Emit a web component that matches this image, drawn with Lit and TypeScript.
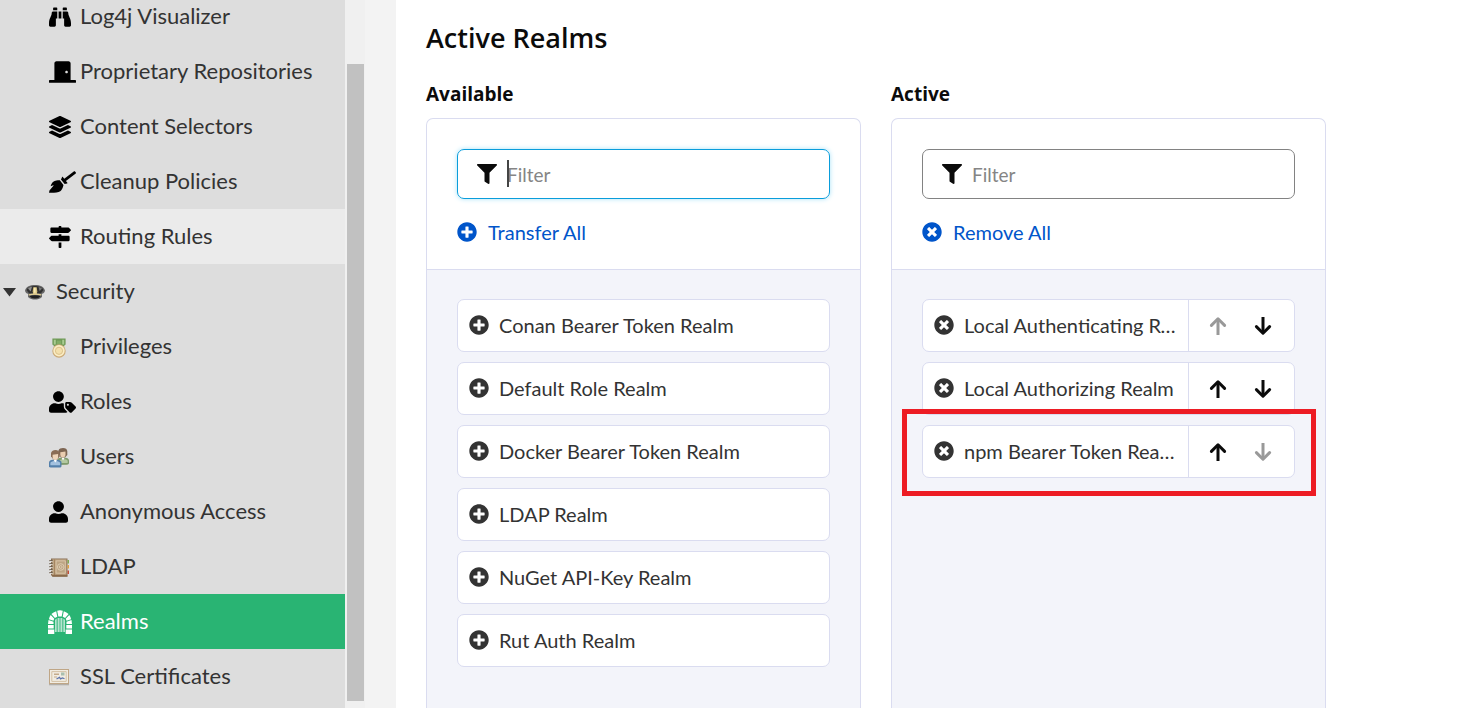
import { LitElement, html, css, svg, nothing } from "lit";
import { customElement, property, state } from "lit/decorators.js";
import { classMap } from "lit/directives/class-map.js";

const glyphs: Record<string, { w: number; d: string }> = {
  binoculars: { w: 512, d: "M416 48c0-8.84-7.16-16-16-16h-64c-8.84 0-16 7.16-16 16v48h96V48zM63.91 159.99C61.4 253.84 3.46 274.22 0 404v44c0 17.67 14.33 32 32 32h96c17.67 0 32-14.33 32-32V288h32V128H95.84c-17.63 0-31.45 14.37-31.93 31.99zm384.18 0c-.48-17.62-14.3-31.99-31.93-31.99H320v160h32v160c0 17.67 14.33 32 32 32h96c17.67 0 32-14.33 32-32v-44c-3.46-129.78-61.4-150.16-63.91-244.01zM176 32h-64c-8.84 0-16 7.16-16 16v48h96V48c0-8.84-7.16-16-16-16zm48 256h64V128h-64v160z" },
  door: { w: 640, d: "M624 448H512V50.8C512 22.78 490.47 0 464 0H175.99c-26.47 0-48 22.78-48 50.8V448H16c-8.84 0-16 7.16-16 16v32c0 8.84 7.16 16 16 16h608c8.84 0 16-7.16 16-16v-32c0-8.84-7.16-16-16-16zM415.99 288c-17.67 0-32-14.33-32-32s14.33-32 32-32 32 14.33 32 32c.01 17.67-14.32 32-32 32z" },
  layers: { w: 512, d: "M12.41 148.02l232.94 105.67c6.8 3.09 14.49 3.09 21.29 0l232.94-105.67c16.55-7.51 16.55-32.52 0-40.03L266.65 2.31a25.607 25.607 0 0 0-21.29 0L12.41 107.98c-16.55 7.51-16.55 32.53 0 40.04zm487.18 88.28l-58.09-26.33-161.64 73.27c-7.56 3.43-15.59 5.17-23.86 5.17s-16.29-1.74-23.86-5.17L70.51 209.97l-58.1 26.33c-16.55 7.5-16.55 32.5 0 40l232.94 105.59c6.8 3.08 14.49 3.08 21.29 0L499.59 276.3c16.55-7.5 16.55-32.5 0-40zm0 127.8l-57.87-26.23-161.86 73.37c-7.56 3.43-15.59 5.17-23.86 5.17s-16.29-1.74-23.86-5.17L70.29 337.87 12.41 364.1c-16.55 7.5-16.55 32.5 0 40l232.94 105.59c6.8 3.08 14.49 3.08 21.29 0L499.59 404.1c16.55-7.5 16.55-32.5 0-40z" },
  broom: { w: 640, d: "M256.47 216.77l86.73 109.18s-16.6 102.36-76.57 150.12C206.66 523.85 0 510.19 0 510.19s3.8-23.14 11-55.43l94.62-112.17c3.97-4.7-.87-11.62-6.65-9.5l-60.4 22.09c14.44-41.66 32.72-80.04 54.6-97.47 59.97-47.76 163.3-40.94 163.3-40.94zM636.53 31.03l-19.86-25c-5.49-6.9-15.52-8.05-22.41-2.56l-232.48 177.8-34.14-42.97c-5.09-6.41-15.14-5.21-18.59 2.21l-25.33 54.55 86.73 109.18 58.8-12.45c8-1.69 11.42-11.2 6.34-17.6l-34.09-42.92 232.48-177.8c6.89-5.48 8.04-15.53 2.55-22.44z" },
  signs: { w: 512, d: "M507.31 84.69L464 41.37c-6-6-14.14-9.37-22.63-9.37H288V16c0-8.84-7.16-16-16-16h-32c-8.84 0-16 7.16-16 16v16H56c-13.25 0-24 10.75-24 24v80c0 13.25 10.75 24 24 24h385.37c8.49 0 16.62-3.37 22.63-9.37l43.31-43.31c6.25-6.26 6.25-16.38 0-22.63zM224 496c0 8.84 7.16 16 16 16h32c8.84 0 16-7.16 16-16V384h-64v112zm232-272H288v-32h-64v32H70.63c-8.49 0-16.62 3.37-22.63 9.37L4.69 276.69c-6.25 6.25-6.25 16.38 0 22.63L48 342.63c6 6 14.14 9.37 22.63 9.37H456c13.25 0 24-10.75 24-24v-80c0-13.25-10.75-24-24-24z" },
  user: { w: 448, d: "M224 256c70.7 0 128-57.3 128-128S294.7 0 224 0 96 57.3 96 128s57.3 128 128 128zm89.6 32h-16.7c-22.2 10.2-46.9 16-72.9 16s-50.6-5.8-72.9-16h-16.7C60.2 288 0 348.2 0 422.4V464c0 26.5 21.5 48 48 48h352c26.5 0 48-21.5 48-48v-41.6c0-74.2-60.2-134.4-134.4-134.4z" },
  userTag: { w: 640, d: "M630.6 364.9l-90.3-90.2c-12-12-28.3-18.7-45.3-18.7h-79.3c-17.7 0-32 14.3-32 32v79.2c0 17 6.7 33.2 18.7 45.2l90.3 90.2c12.5 12.5 32.8 12.5 45.3 0l92.5-92.5c12.6-12.5 12.6-32.7.1-45.2zm-182.8-21c-13.3 0-24-10.7-24-24s10.7-24 24-24 24 10.7 24 24c0 13.2-10.7 24-24 24zm-223.8-88c70.7 0 128-57.3 128-128C352 57.3 294.7 0 224 0S96 57.3 96 128c0 70.6 57.3 127.9 128 127.9zm127.8 111.2V294c-12.2-3.6-24.9-6.2-38.2-6.2h-16.7c-22.2 10.2-46.9 16-72.9 16s-50.6-5.8-72.9-16h-16.7c-74.2 0-134.4 60.2-134.4 134.4V464c0 26.5 21.5 48 48 48h352c15.5 0 29.1-7.5 37.9-18.9l-58-58c-18.1-18.1-28.1-42.2-28.1-68z" },
  plus: { w: 512, d: "M256 8C119 8 8 119 8 256s111 248 248 248 248-111 248-248S393 8 256 8zm144 276c0 6.6-5.4 12-12 12h-92v92c0 6.6-5.4 12-12 12h-56c-6.6 0-12-5.4-12-12v-92h-92c-6.6 0-12-5.4-12-12v-56c0-6.6 5.4-12 12-12h92v-92c0-6.6 5.4-12 12-12h56c6.6 0 12 5.4 12 12v92h92c6.6 0 12 5.4 12 12v56z" },
  times: { w: 512, d: "M256 8C119 8 8 119 8 256s111 248 248 248 248-111 248-248S393 8 256 8zm121.6 313.1c4.7 4.7 4.7 12.3 0 17L338 377.6c-4.7 4.7-12.3 4.7-17 0L256 312l-65.1 65.6c-4.7 4.7-12.3 4.7-17 0L134.4 338c-4.7-4.7-4.7-12.3 0-17l65.6-65-65.6-65.1c-4.7-4.7-4.7-12.3 0-17l39.6-39.6c4.7-4.7 12.3-4.7 17 0l65 65.7 65.1-65.6c4.7-4.7 12.3-4.7 17 0l39.6 39.6c4.7 4.7 4.7 12.3 0 17L312 256l65.6 65.1z" },
  filter: { w: 512, d: "M487.976 0H24.028C2.71 0-8.047 25.866 7.058 40.971L192 225.941V432c0 7.831 3.821 15.17 10.237 19.662l80 55.98C298.02 518.69 320 507.493 320 487.98V225.941l184.947-184.97C520.021 25.896 509.338 0 487.976 0z" },
};

const glyph = (name: string, size: number) => {
  const g = glyphs[name];
  return html`<svg aria-hidden="true" width=${Math.floor((g.w / 512) * size)} height=${size} viewBox="0 0 ${g.w} 512"><path fill="currentColor" d=${g.d}></path></svg>`;
};

const arrow = (down: boolean) => html`<svg aria-hidden="true" width="18" height="20" viewBox="0 0 18 20" fill="none" stroke="currentColor" stroke-width="3" stroke-linecap="round" stroke-linejoin="round">
  ${down ? svg`<path stroke-linecap="butt" d="M9 1V17"></path><path d="M2.4 10.6L9 17.2L15.6 10.6"></path>` : svg`<path stroke-linecap="butt" d="M9 19V3"></path><path d="M2.4 9.4L9 2.8L15.6 9.4"></path>`}
</svg>`;

const art: Record<string, unknown> = {
  cap: html`<svg aria-hidden="true" width="20" height="20" viewBox="0 0 20 20">
    <path fill="#666" d="M0 8.4C1 4.800 5 3 10 3s9 1.800 10 5.400c-.2 2-1.500 2.900-3 3.300v3.300C15 17 12.500 17.500 10 17.500S5 17 3 15v-3.300C1.500 11.300.2 10.400 0 8.400z"/>
    <path fill="#303030" d="M1.500 8C3 5 6 4 10 4S17 5 18.500 8L16 11.200H4z"/>
    <path fill="#8d8d8d" d="M3 6.500c1.200-1 2.500-1.500 4-1.700L5.600 9.500z"/>
    <path fill="#777" d="M17 6.500c-1-.9-2.200-1.300-3.400-1.600l1 4.300z"/>
    <path fill="#d9c583" d="M8.300 5.200h3.400l.6 4.300-.6 3H8.300l-.6-3z"/><path fill="#fff2bf" d="M9.200 5.800h1.300v5H9.200z"/>
    <path fill="none" stroke="#e2cf93" stroke-width="1.300" d="M3.700 12.900Q10 11.300 16.300 12.900"/>
    <path fill="#202020" d="M4.300 14.300Q10 12.300 15.700 14.300 13.500 16.500 10 16.500T4.300 14.300z"/></svg>`,
  medal: html`<svg aria-hidden="true" width="20" height="22" viewBox="0 -2 20 22">
    <path fill="#6f9a57" d="M3.400.5h13.200v6l-2 1.700H5.400l-2-1.700z"/><path fill="#a9cb90" d="M4.800 1.800h2v4.700h-2zm8.400 0h2v4.700h-2z"/><path fill="#82ad66" d="M7.800 2.600h4.400v3.600H7.800z"/>
    <circle cx="10" cy="13" r="6.700" fill="#cbab78"/><circle cx="10" cy="12.800" r="5.700" fill="#fbedc4"/><circle cx="10" cy="12.800" r="3.600" fill="#f4e0ac" stroke="#dcc28a"/></svg>`,
  users: html`<svg aria-hidden="true" width="20" height="22" viewBox="0 -2 20 22">
    <path fill="#7f9a6c" d="M8 17v-4.500c0-2 2-3 6-3s6 1 6 3V15c0 1-1 1.700-2 1.700z"/><path fill="#b3c8a1" d="M10 15v-2c1-2 7-2.500 8.700-.3V15z"/><path fill="#fff" d="M12.400 9.600h3.400L14 12.500z"/>
    <path fill="#7d6552" d="M9.500 6V2.500C10 .7 12 0 14 0c2.500 0 4.300 1 4.300 3.500V7L16 9.500h-4z"/><path fill="#eacdb0" d="M11.300 4.300l5.200-.8v3c0 1.800-1.100 3-2.600 3s-2.600-1.200-2.600-3z"/>
    <path fill="#5480ab" d="M0 19v-4.500c0-2 2-3 6-3s6.500 1 6.500 3V18c0 1-1 1.600-2 1.600H1.500z"/><path fill="#a3c1df" d="M1.400 17.300v-2.500c1.200-2.200 8.200-2.500 9.700 0v2.500z"/><path fill="#fff" d="M4.300 11.600h4L6.300 14.500z"/>
    <path fill="#8a6d56" d="M2 8.500V5c.5-1.900 2.300-3 4.500-3s4.200 1.200 4.200 3.600v3L8 11.500H4.500z"/><path fill="#efd5ba" d="M3.600 6.700l5.500-.8v3c0 1.700-1.200 3-2.700 3s-2.800-1.300-2.800-3z"/></svg>`,
  book: html`<svg aria-hidden="true" width="20" height="22" viewBox="0 -2 20 22">
    <path fill="#8a7056" d="M2 .5h16.500v18.300H3.600L2 17z"/><path fill="#bda584" d="M3 1.300h14.500V17H3z"/><path fill="#a58561" d="M5 1.300h1V17H5z"/><path fill="#8b6a49" d="M2.500 16.800h15.800v1.800H3.500z"/>
    <path fill="none" stroke="#dfccb0" stroke-width=".8" d="M7.100 2.900h9.200v12.300H7.100z"/>
    <circle cx="11.700" cy="9" r="3.300" fill="none" stroke="#dfceb4" stroke-width=".9"/><circle cx="11.700" cy="9" r="1.400" fill="none" stroke="#dfceb4" stroke-width=".9"/>
    <path fill="#83aa54" d="M18.500 2H20v3.500h-1.500z"/><path fill="#e0a044" d="M18.500 7H20v3.500h-1.500z"/><path fill="#c24d35" d="M18.500 12.500H20V16h-1.500z"/>
    <path stroke="#655643" stroke-width="1" d="M0 3l4-.8M0 6l4-.8M0 9l4-.8M0 12l4-.8M0 15l4-.8"/><path stroke="#eee" stroke-width=".8" d="M0 4l3.500-.8M0 7l3.500-.8M0 10l3.500-.8M0 13l3.500-.8M0 16l3.500-.8"/></svg>`,
  arch: html`<svg aria-hidden="true" width="24" height="24" viewBox="0 0 24 24">
    <path fill="#fff" d="M9.200.8Q12-.2 14.800.8L13.700 6.400h-3.400zM8.200 1.200L9.300 6.700 6.900 8 3.400 4.100Q5.400 2 8.200 1.200zM15.800 1.200Q18.600 2 20.600 4.100L17.100 8l-2.400-1.300zM2.700 4.900L6.300 8.800Q5.700 9.600 5.500 10.800L.9 9.200Q1.300 6.600 2.700 4.900zM21.300 4.900Q22.700 6.600 23.100 9.200l-4.600 1.600Q18.300 9.600 17.700 8.800zM.5 10.100l5 1.600V14H0zM23.500 10.100l-5 1.600V14H24zM0 15h5.700v3.600H0zm18.300 0H24v3.600h-5.700zM0 19.600h6.300V24H0zm17.700 0H24V24h-6.300z"/>
    <path fill="#b5e4cf" d="M7 9.800q.7-.8 1.700-1.400V22H7zM9.600 8h2v14h-2zM12.400 8h2v14h-2zM15.300 8.400q1 .6 1.700 1.400V22h-1.700z"/></svg>`,
  certificate: html`<svg aria-hidden="true" width="20" height="20" viewBox="0 0 20 20">
    <path fill="#b3afa9" d="M0 17h20v1.300H0z"/><path fill="#bfa686" d="M0 2h20v15H0z"/><path fill="#f1ece2" d="M1 3h18v13H1z"/><path fill="none" stroke="#d4c2a6" stroke-width="1" d="M2.800 4.600h14.400v9.800H2.800z"/>
    <path fill="#c4aa8a" d="M5 6.500h5V8H5zM5 9.500h3v1H5z"/><path fill="#a9bfae" d="M12 5.500h3.500v3H12z"/><path fill="none" stroke="#5f74aa" stroke-width="1.200" d="M7.500 12l3-1.600 1 1.500 2-1 2 .8"/></svg>`,
};

@customElement("side-nav")
class SideNav extends LitElement {
  @state() private items = [
    { label: "Log4j Visualizer", icon: "binoculars" },
    { label: "Proprietary Repositories", icon: "door" },
    { label: "Content Selectors", icon: "layers" },
    { label: "Cleanup Policies", icon: "broom" },
    { label: "Routing Rules", icon: "signs", hover: true },
    { label: "Security", icon: "cap", group: true },
    { label: "Privileges", icon: "medal" },
    { label: "Roles", icon: "userTag" },
    { label: "Users", icon: "users" },
    { label: "Anonymous Access", icon: "user" },
    { label: "LDAP", icon: "book" },
    { label: "Realms", icon: "arch", current: true },
    { label: "SSL Certificates", icon: "certificate" },
  ] as { label: string; icon: string; hover?: boolean; group?: boolean; current?: boolean }[];

  static styles = css`
    :host { display: flex; height: 100%; overflow: hidden; background: #f0f0f0; }
    nav { flex: 1; background: #ddd; overflow: hidden; }
    /* The menu is scrolled part of the way down its first row. */
    ul { list-style: none; margin: -11px 0 0; padding: 0; }
    a { display: flex; align-items: center; height: 55px; padding-left: 48px; color: #333; text-decoration: none; white-space: nowrap; }
    a.hover { background: #ebebeb; }
    a.current { background: #29b473; color: #fff; }
    a.group { padding-left: 3px; }
    .icon { display: flex; box-sizing: border-box; width: 32px; padding-left: 1px; color: #000; }
    .current .icon { padding-left: 0; }
    .group .icon { width: 31px; padding-left: 0; }
    .label { padding-bottom: 1px; }
    .twisty { width: 22px; display: flex; }
    svg { display: block; flex: none; }
    .track { width: 20px; box-sizing: border-box; padding: 64px 1px 7px 2px; }
    .thumb { height: 100%; background: #c1c1c1; }
  `;

  render() {
    return html`<nav aria-label="Administration"><ul>
      ${this.items.map((i) => html`<li><a href="#" class=${classMap({ hover: !!i.hover, group: !!i.group, current: !!i.current })} aria-current=${i.current ? "page" : nothing}>
        ${i.group ? html`<span class="twisty"><svg width="14" height="11" viewBox="0 -2 14 11"><path fill="#333" d="M0 0H13L6.500 8.500z"/></svg></span>` : nothing}
        <span class="icon">${art[i.icon] ?? glyph(i.icon, 22)}</span><span class="label">${i.label}</span></a></li>`)}
    </ul></nav><div class="track"><div class="thumb"></div></div>`;
  }
}

@customElement("realm-panel")
class RealmPanel extends LitElement {
  @property() heading = "";
  @property() action = "";
  @property({ type: Boolean }) active = false;
  @property({ attribute: false }) realms: string[] = [];

  static styles = css`
    :host { display: flex; flex-direction: column; min-width: 0; color: #333; }
    h2 { margin: 0 0 10px; font: 700 19px/28px "Open Sans", sans-serif; color: #0b0b0b; }
    svg { display: block; flex: none; }
    button { font: inherit; color: inherit; background: none; border: 0; padding: 0; text-align: left; cursor: pointer; }
    .panel { flex: 1; display: flex; flex-direction: column; border: 1px solid #dadcf0; border-bottom: 0; border-radius: 7px 7px 0 0; overflow: hidden; }
    .top { height: 150px; box-sizing: border-box; padding: 30px; }
    .field { position: relative; display: flex; align-items: center; gap: 10px; height: 50px; box-sizing: border-box; padding: 0 19px; border: 1px solid #828282; border-radius: 7px; color: #0b0b0b; }
    .field.focus { border-color: #0a9ddb; box-shadow: 0 0 5px #a9e2f8; }
    input { flex: 1; min-width: 0; border: 0; outline: 0; padding: 2px 0 0; background: none; font: 400 19px/28px Lato, sans-serif; color: inherit; }
    input::placeholder { color: #858585; opacity: 1; }
    .caret { position: absolute; left: 49px; top: 10px; width: 2px; height: 27px; background: #444; }
    .all { display: flex; align-items: center; gap: 11px; margin-top: 19px; line-height: 28px; color: #0055ca; }
    .list { flex: 1; margin: 0; padding: 29px 30px; list-style: none; border-top: 1px solid #dadcf0; background: #f3f4fa; display: flex; flex-direction: column; gap: 10px; }
    .item { position: relative; display: flex; height: 53px; box-sizing: border-box; background: #fff; border: 1px solid #dadcf0; border-radius: 7px; }
    .name { flex: 1; min-width: 0; display: flex; align-items: center; gap: 10px; padding: 0 10px 2px 11px; }
    .name span { overflow: hidden; text-overflow: ellipsis; white-space: nowrap; }
    .moves { display: flex; align-items: center; justify-content: space-between; width: 106px; box-sizing: border-box; padding: 0 22px 0 20px; border-left: 1px solid #dadcf0; color: #0b0b0b; }
    .moves button:disabled { color: #999; }
    .callout { position: absolute; inset: -17px -22px -19px -21px; border: 5px solid #ed1c24; pointer-events: none; }
  `;

  render() {
    const last = this.realms.length - 1;
    const icon = this.active ? "times" : "plus";
    return html`<h2>${this.heading}</h2>
      <div class="panel">
        <div class="top">
          <label class=${classMap({ field: true, focus: !this.active })}>${glyph("filter", 20)}
            <input type="text" placeholder="Filter" aria-label="Filter ${this.heading}">
            ${this.active ? nothing : html`<span class="caret"></span>`}</label>
          <button class="all">${glyph(icon, 20)}<span>${this.action}</span></button>
        </div>
        <ul class="list">
          ${this.realms.map((r, n) => html`<li class="item">
            <button class="name">${glyph(icon, 20)}<span>${r}</span></button>
            ${this.active ? html`<div class="moves">
              <button aria-label="Move up" ?disabled=${n === 0}>${arrow(false)}</button>
              <button aria-label="Move down" ?disabled=${n === last}>${arrow(true)}</button></div>` : nothing}
            ${this.active && n === last ? html`<div class="callout"></div>` : nothing}
          </li>`)}
        </ul>
      </div>`;
  }
}

@customElement("app-root")
class AppRoot extends LitElement {
  private available = ["Conan Bearer Token Realm", "Default Role Realm", "Docker Bearer Token Realm", "LDAP Realm", "NuGet API-Key Realm", "Rut Auth Realm"];
  private active = ["Local Authenticating Realm", "Local Authorizing Realm", "npm Bearer Token Realm"];

  static styles = css`
    :host { display: grid; grid-template-columns: 365px 1fr; height: 100vh; overflow: hidden; background: #f3f3f3; font: 22px/28px Lato, sans-serif; }
    side-nav { min-height: 0; }
    main { margin-left: 31px; padding: 20px 30px 0; background: #fff; display: flex; flex-direction: column; min-width: 0; }
    h1 { margin: 0; font: 600 27px/36px "Open Sans", sans-serif; color: #0b0b0b; }
    .columns { flex: 1; display: grid; grid-template-columns: 1fr 1fr; gap: 30px; max-width: 900px; margin-top: 24px; font-size: 20px; }
  `;

  render() {
    return html`<side-nav></side-nav>
      <main><h1>Active Realms</h1>
        <div class="columns">
          <realm-panel heading="Available" action="Transfer All" .realms=${this.available}></realm-panel>
          <realm-panel heading="Active" action="Remove All" active .realms=${this.active}></realm-panel>
        </div></main>`;
  }
}
